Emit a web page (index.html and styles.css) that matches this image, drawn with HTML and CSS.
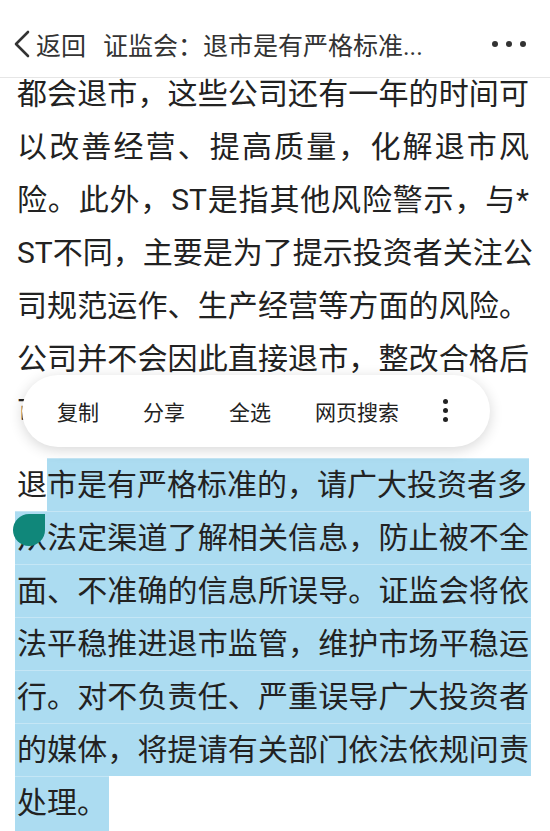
FILE: index.html
```html
<!DOCTYPE html>
<html lang="zh-CN">
<head>
    <meta charset="UTF-8">
    <meta name="viewport" content="width=device-width, initial-scale=1.0">
    <title>证监会：退市是有严格标准的</title>
    <link rel="stylesheet" href="styles.css">
</head>
<body>

<div class="topbar">
    <div class="back">
        <svg class="back-icon" width="18" height="28" viewBox="0 0 18 28">
            <polyline points="15,2 3,14 15,26" fill="none" stroke="#333" stroke-width="2.6" stroke-linecap="round" stroke-linejoin="round"/>
        </svg>
        <span>返回</span>
    </div>
    <div class="title">证监会：退市是有严格标准...</div>
    <div class="more">
        <i></i><i></i><i></i>
    </div>
</div>

<div class="article">
    <p class="para">
        <span class="ln">都会退市，这些公司还有一年的时间可</span>
        <span class="ln">以改善经营、提高质量，化解退市风</span>
        <span class="ln">险。此外，ST是指其他风险警示，与*</span>
        <span class="ln">ST不同，主要是为了提示投资者关注公</span>
        <span class="ln">司规范运作、生产经营等方面的风险。</span>
        <span class="ln">公司并不会因此直接退市，整改合格后</span>
        <span class="ln end">可申请撤销风险警示。</span>
    </p>
    <p class="para second">
        <span class="ln">退<span class="sel">市是有严格标准的，请广大投资者多</span></span>
        <span class="ln full">从法定渠道了解相关信息，防止被不全<b class="handle"></b></span>
        <span class="ln full">面、不准确的信息所误导。证监会将依</span>
        <span class="ln full">法平稳推进退市监管，维护市场平稳运</span>
        <span class="ln full">行。对不负责任、严重误导广大投资者</span>
        <span class="ln full">的媒体，将提请有关部门依法依规问责</span>
        <span class="ln end"><span class="sel last">处理。</span></span>
    </p>

    <!-- 长按选中文字后弹出的菜单 -->
    <div class="menu">
        <span>复制</span>
        <span>分享</span>
        <span>全选</span>
        <span>网页搜索</span>
        <div class="menu-more"><i></i><i></i><i></i></div>
    </div>
</div>

</body>
</html>
```

FILE: styles.css
```css
body {
    margin: 0;
    padding: 0;
    width: 550px;
    height: 831px;
    overflow: hidden;
    background-color: #fff;
    font-family: Roboto, "Noto Sans CJK SC", sans-serif;
    color: #222;
}
.topbar {
    height: 78px;
    padding-top: 10px;
    box-sizing: border-box;
    border-bottom: 1px solid #e6e6e6;
    display: flex;
    align-items: center;
    font-size: 25px;
    color: #333;
}
.back {
    display: flex;
    align-items: center;
    padding-left: 13px;
    width: 90px;
}
.back-icon {
    margin-right: 5px;
}
.title {
    flex: 1;
    white-space: nowrap;
}
.more {
    display: flex;
    gap: 8px;
    margin-right: 24px;
}
.more i {
    width: 6px;
    height: 6px;
    border-radius: 50%;
    background-color: #333;
}
.article {
    position: relative;
    margin-top: -11.5px;
    padding: 0 21px 0 17px;
}
.para {
    margin: 0;
    font-size: 30px;
    line-height: 53px;
}
.para.second {
    margin-top: 20px;
}
.ln {
    display: block;
    position: relative;
    white-space: nowrap;
    text-align: justify;
    text-align-last: justify;
}
.ln.end {
    text-align-last: left;
}
.ln.full {
    margin: 0 -2px;
    padding: 0 2px;
    background-color: #acdcf1;
    box-shadow: inset 0 1px 0 rgba(255, 255, 255, 0.3);
}
.sel {
    display: inline-block;
    padding-right: 2px;
    background-color: #acdcf1;
    box-shadow: inset 0 1px 0 rgba(255, 255, 255, 0.3);
}
.sel.last {
    height: 80px;
    margin-left: -2px;
    padding-left: 2px;
    vertical-align: top;
}
.handle {
    position: absolute;
    left: -2px;
    top: 3px;
    width: 32px;
    height: 32px;
    border-radius: 50% 0 50% 50%;
    background-color: #10877a;
}
.menu {
    position: absolute;
    left: 22px;
    top: 308px;
    width: 468px;
    height: 72px;
    box-sizing: border-box;
    padding-left: 35px;
    border-radius: 36px;
    background-color: #fff;
    box-shadow: 0 3px 14px rgba(0, 0, 0, 0.16);
    display: flex;
    align-items: center;
    gap: 44px;
    font-size: 21px;
    color: #222;
}
.menu-more {
    display: flex;
    flex-direction: column;
    gap: 4px;
    margin-left: 0;
}
.menu-more i {
    width: 5px;
    height: 5px;
    border-radius: 50%;
    background-color: #222;
}
```
